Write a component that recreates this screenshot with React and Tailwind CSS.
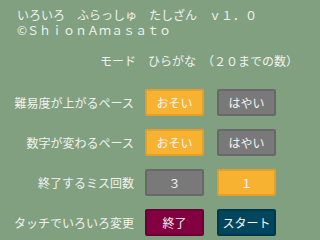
import React from 'react';

const font = { fontFamily: '"Noto Sans CJK JP", "Noto Sans", sans-serif' };

// Button colour variants
const tones = {
  orange: 'bg-[#f8b232] border-[#e2a02a]',
  gray: 'bg-[#797979] border-[#686868]',
  maroon: 'bg-[#820040] border-[#6a0034]',
  teal: 'bg-[#02465e] border-[#01384b]',
};

function Btn({ tone, children }) {
  return (
    <div
      className={`w-[59px] h-[27px] rounded-[2px] border-2 flex items-center justify-center text-[12px] text-[#f4f4f4] ${tones[tone]}`}
    >
      {children}
    </div>
  );
}

function Row({ label, left, right }) {
  return (
    <div className="flex items-center h-[27px]">
      <div className="w-[134px] text-right text-[12px] leading-[14px] text-[#f2f2f2]">{label}</div>
      <div className="ml-[11px]">
        <Btn tone={left[0]}>{left[1]}</Btn>
      </div>
      <div className="ml-[13px]">
        <Btn tone={right[0]}>{right[1]}</Btn>
      </div>
    </div>
  );
}

export default function App() {
  return (
    <div className="w-[320px] h-[240px] overflow-hidden bg-[#80a080] text-[#f2f2f2]" style={font}>
      <div className="pt-[7px] pl-[17px] text-[12px] leading-[15px] whitespace-pre">
        <div>いろいろ　ふらっしゅ　たしざん　ｖ１．０</div>
        <div>©ＳｈｉｏｎＡｍａｓａｔｏ</div>
      </div>
      <div className="mt-[17px] pl-[100px] text-[12px] leading-[14px] whitespace-pre">
        モード　ひらがな　（２０までの数）
      </div>
      <div className="mt-[21px] flex flex-col gap-[13px]">
        <Row label="難易度が上がるペース" left={['orange', 'おそい']} right={['gray', 'はやい']} />
        <Row label="数字が変わるペース" left={['orange', 'おそい']} right={['gray', 'はやい']} />
        <Row label="終了するミス回数" left={['gray', '３']} right={['orange', '１']} />
        <Row label="タッチでいろいろ変更" left={['maroon', '終了']} right={['teal', 'スタート']} />
      </div>
    </div>
  );
}
